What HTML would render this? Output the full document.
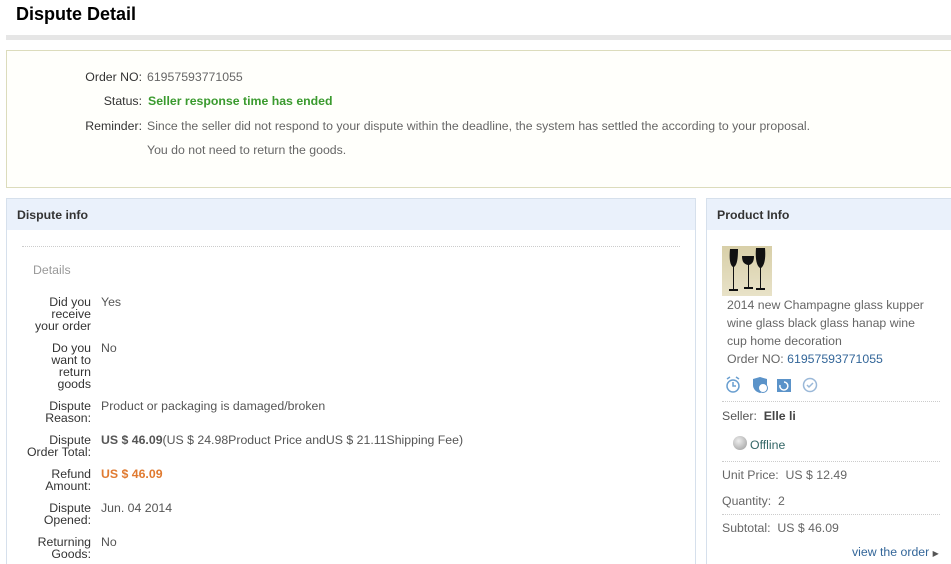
<!DOCTYPE html>
<html><head><style>
*{margin:0;padding:0;box-sizing:border-box}
html,body{width:951px;height:564px;overflow:hidden}
body{background:#fff;font-family:"Liberation Sans",Arial,sans-serif;font-size:12.3px;color:#333;position:relative}
.a{position:absolute;white-space:nowrap}
.lbl{position:absolute;right:860px;text-align:right;line-height:12px;color:#333}
.val{position:absolute;left:101px;line-height:12px;color:#555}
.g{color:#666}
</style></head><body>
<div class="a" style="left:16px;top:4px;font-size:18px;font-weight:bold;color:#000">Dispute Detail</div>
<div class="a" style="left:6px;top:35px;width:945px;height:5px;background:#e6e6e6"></div>
<div class="a" style="left:6px;top:50px;width:945px;height:138px;border:1px solid #dcdcbc;border-right:none;background:#fffffb"></div>
<div class="a" style="right:809px;top:70px;color:#333">Order NO:</div>
<div class="a g" style="left:147px;top:70px">61957593771055</div>
<div class="a" style="right:809px;top:94px;color:#333">Status:</div>
<div class="a" style="left:148px;top:94px;color:#3a9a2e;font-weight:bold">Seller response time has ended</div>
<div class="a" style="right:809px;top:119px;color:#333">Reminder:</div>
<div class="a g" style="left:147px;top:119px">Since the seller did not respond to your dispute within the deadline, the system has settled the according to your proposal.</div>
<div class="a g" style="left:147px;top:143px">You do not need to return the goods.</div>

<div class="a" style="left:6px;top:198px;width:690px;height:366px;border:1px solid #d6e0ec;border-bottom:none"></div>
<div class="a" style="left:7px;top:199px;width:688px;height:31px;background:#eaf1fb"></div>
<div class="a" style="left:17px;top:208px;font-weight:bold;color:#333">Dispute info</div>
<div class="a" style="left:22px;top:246px;width:658px;border-top:1px dotted #ccc"></div>
<div class="a" style="left:33px;top:263px;color:#999">Details</div>

<div class="lbl" style="top:296px">Did you<br>receive<br>your order</div><div class="val" style="top:296px">Yes</div>
<div class="lbl" style="top:342px">Do you<br>want to<br>return<br>goods</div><div class="val" style="top:342px">No</div>
<div class="lbl" style="top:400px">Dispute<br>Reason:</div><div class="val" style="top:400px">Product or packaging is damaged/broken</div>
<div class="lbl" style="top:434px">Dispute<br>Order Total:</div><div class="val" style="top:434px;white-space:nowrap"><b style="color:#555">US $ 46.09</b>(US $ 24.98Product Price andUS $ 21.11Shipping Fee)</div>
<div class="lbl" style="top:468px">Refund<br>Amount:</div><div class="val" style="top:468px;color:#e07a30;font-weight:bold">US $ 46.09</div>
<div class="lbl" style="top:502px">Dispute<br>Opened:</div><div class="val" style="top:502px">Jun. 04 2014</div>
<div class="lbl" style="top:536px">Returning<br>Goods:</div><div class="val" style="top:536px">No</div>

<div class="a" style="left:706px;top:198px;width:245px;height:366px;border:1px solid #d6e0ec;border-bottom:none;border-right:none"></div>
<div class="a" style="left:707px;top:199px;width:244px;height:31px;background:#eaf1fb"></div>
<div class="a" style="left:717px;top:208px;font-weight:bold;color:#333">Product Info</div>
<div class="a" style="left:722px;top:246px;width:50px;height:50px;background:linear-gradient(#d8cfa8,#e8e2c8);overflow:hidden">
<svg width="50" height="50"><g fill="#111"><path d="M8 3h8c0 10-1 16-4 18v22h4v2h-9v-2h4V21c-3-2-4-8-3-18z"/><path d="M20 10h12c0 6-2 8-5 9v22h4v2h-9v-2h4V19c-4-1-6-3-6-9z"/><path d="M34 2h9c1 12-1 18-4 20v20h4v2h-9v-2h4V22c-3-2-5-8-4-20z"/></g></svg></div>
<div class="a" style="left:727px;top:296px;line-height:18px;color:#666;white-space:normal;width:205px">2014 new Champagne glass kupper wine glass black glass hanap wine cup home decoration</div>
<div class="a" style="left:727px;top:352px;color:#666">Order NO: <span style="color:#336699">61957593771055</span></div>
<svg class="a" style="left:725px;top:376px" width="100" height="18"><g fill="none" stroke="#6a9fd0" stroke-width="1.5"><circle cx="8" cy="10" r="6"/><path d="M8 6v4h3M2 3l3-2M14 3l-3-2"/><circle cx="85" cy="9" r="6.5" stroke="#9ab8d8"/><path d="M82 9l2 2 4-4" stroke="#9ab8d8"/></g><path d="M28 3l7-2 7 2v6c0 4-3 7-7 8-4-1-7-4-7-8z" fill="#5b93c9"/><circle cx="38" cy="12" r="4.5" fill="#fff" stroke="#5b93c9"/><rect x="52" y="3" width="14" height="13" fill="#5b93c9"/><path d="M55 9a4 4 0 1 0 4-3" stroke="#fff" fill="none" stroke-width="1.5"/></svg>
<div class="a" style="left:722px;top:401px;width:218px;border-top:1px dotted #ccc"></div>
<div class="a" style="left:722px;top:409px;color:#555">Seller:&nbsp; <b style="color:#444">Elle li</b></div>
<div class="a" style="left:733px;top:436px;width:14px;height:14px;border-radius:50%;background:radial-gradient(circle at 40% 35%,#eee,#999)"></div>
<div class="a" style="left:750px;top:438px;color:#336666">Offline</div>
<div class="a" style="left:722px;top:461px;width:218px;border-top:1px dotted #ccc"></div>
<div class="a" style="left:722px;top:468px;color:#666">Unit Price:&nbsp; US $ 12.49</div>
<div class="a" style="left:722px;top:494px;color:#666">Quantity:&nbsp; 2</div>
<div class="a" style="left:722px;top:514px;width:218px;border-top:1px dotted #ccc"></div>
<div class="a" style="left:722px;top:521px;color:#666">Subtotal:&nbsp; US $ 46.09</div>
<div class="a" style="left:852px;top:545px;color:#336699">view the order <span style="font-size:8px;color:#555">&#9654;</span></div>
</body></html>
